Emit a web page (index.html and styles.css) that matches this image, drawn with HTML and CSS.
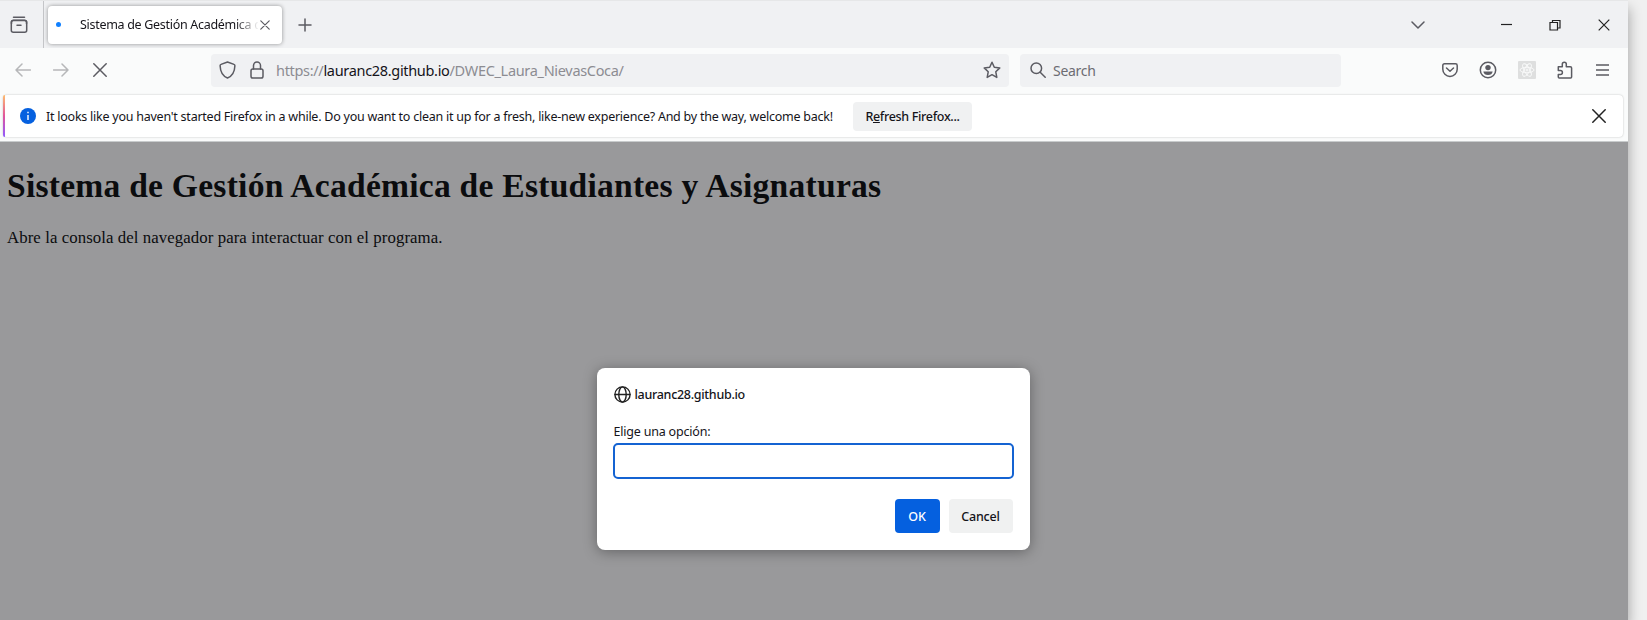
FILE: index.html
```
<!DOCTYPE html>
<html lang="es">
<head>
<meta charset="utf-8">
<title>Sistema de Gestión Académica</title>
<link rel="stylesheet" href="styles.css">
</head>
<body>
<div class="window">
  <header class="tabbar">
    <div class="view">
      <svg class="icon" width="18" height="18" viewBox="0 0 18 18"><path d="M3.5 1.2h11"/><rect x="1.3" y="4.4" width="15.4" height="11.8" rx="2"/><path d="M1.5 7.4V6q0-1.8 2-1.8h11q2 0 2 1.8v1.4M7 9.3h4"/></svg>
    </div>
    <div class="tab">
      <span class="loading"></span>
      <span class="tab-title">Sistema de Gestión Académica d</span>
      <svg class="icon" width="10" height="10" viewBox="0 0 10 10"><path d="M.8.8l8.4 8.4M9.2.8L.8 9.2"/></svg>
    </div>
    <svg class="icon new-tab" width="14" height="14" viewBox="0 0 14 14"><path d="M7 1v12M1 7h12"/></svg>
    <svg class="icon all-tabs" width="14" height="8" viewBox="0 0 14 8"><path d="M1 1l6 6 6-6"/></svg>
    <svg class="icon sys minimize" width="11" height="11" viewBox="0 0 11 11"><path d="M0 5.5h11"/></svg>
    <svg class="icon sys restore" width="12" height="12" viewBox="0 0 12 12"><path d="M1 3.5h7.5V11H1zM3.5 3.5v-2H11V9H8.5"/></svg>
    <svg class="icon sys close" width="12" height="12" viewBox="0 0 12 12"><path d="M.7.7l10.6 10.6M11.3.7L.7 11.3"/></svg>
  </header>

  <nav class="toolbar">
    <svg class="icon dim back" width="16" height="14" viewBox="0 0 16 14"><path d="M15.5 7H1M7 1L1 7l6 6"/></svg>
    <svg class="icon dim forward" width="16" height="14" viewBox="0 0 16 14"><path d="M.5 7H15M9 1l6 6-6 6"/></svg>
    <svg class="icon stop" width="14" height="14" viewBox="0 0 14 14"><path d="M.8.8l12.4 12.4M13.2.8L.8 13.2"/></svg>
    <div class="urlbar">
      <svg class="icon" width="17" height="18" viewBox="0 0 17 18"><path d="M8.5 1L15 3.4q.9.3.9 1.3C15.700 10.500 13.300 15 8.500 17 3.700 15 1.300 10.500 1.100 4.700q0-1 .9-1.300z"/></svg>
      <svg class="icon lock" width="14" height="18" viewBox="0 0 14 18"><rect x="1" y="8" width="12" height="9" rx="1.800"/><path d="M3.500 8V4.500a3.500 3.500 0 017 0V8"/></svg>
      <span class="url">https://<b>lauranc28.github.io</b>/DWEC_Laura_NievasCoca/</span>
      <svg class="icon star" width="18" height="18" viewBox="0 0 18 18"><path d="M9 1.200l2.300 5 5.500.700-4 3.900 1 5.600L9 13.700l-4.800 2.700 1-5.600-4-3.900 5.500-.700z"/></svg>
    </div>
    <div class="search">
      <svg class="icon" width="16" height="16" viewBox="0 0 16 16"><circle cx="6.300" cy="6.300" r="5.300"/><path d="M10.200 10.200l5 5"/></svg>
      <span class="search-text">Search</span>
    </div>
    <div class="actions">
      <svg class="icon" width="16" height="16" viewBox="0 0 16 16"><path d="M2.500 1.800h11q1.700 0 1.700 1.700v3.700a7.200 7.200 0 01-14.400 0V3.500q0-1.700 1.700-1.700zM4.500 6L8 9.300 11.500 6"/></svg>
      <svg class="icon" width="18" height="18" viewBox="0 0 18 18"><circle cx="9" cy="9" r="7.700"/><circle class="solid" cx="9" cy="6.600" r="2.700"/><path class="solid" d="M4.300 10.500h9.400q-.7 3.600-4.700 3.600t-4.700-3.600z"/></svg>
      <svg class="react" width="18" height="18" viewBox="0 0 18 18"><rect width="18" height="18" rx="1"/><g transform="translate(9 9)"><ellipse rx="7" ry="2.700"/><ellipse rx="7" ry="2.700" transform="rotate(60)"/><ellipse rx="7" ry="2.700" transform="rotate(120)"/><circle r="1"/></g></svg>
      <svg class="icon" width="16" height="18" viewBox="0 0 16 18"><path d="M1.300 5.800h4V3.300a2 2 0 014 0v2.500h4q1.300 0 1.300 1.300V16q0 1-1 1H2.300q-1 0-1-1v-2.600h2.100a2 2 0 000-4H1.300z"/></svg>
      <svg class="icon menu" width="13" height="12" viewBox="0 0 13 12"><path d="M0 1h13M0 6h13M0 11h13"/></svg>
    </div>
  </nav>

  <section class="notice-wrap">
    <div class="notice">
      <svg class="info" width="16" height="16" viewBox="0 0 16 16"><circle cx="8" cy="8" r="8"/><path d="M8 7v5M8 3.800v1.500"/></svg>
      <span class="notice-text">It looks like you haven't started Firefox in a while. Do you want to clean it up for a fresh, like-new experience? And by the way, welcome back!</span>
      <button class="refresh"><span>R<u>e</u>fresh Firefox...</span></button>
      <svg class="icon dismiss" width="14" height="14" viewBox="0 0 14 14"><path d="M.8.8l12.400 12.400M13.200.8L.8 13.200"/></svg>
    </div>
  </section>

  <main class="page">
    <h1>Sistema de Gestión Académica de Estudiantes y Asignaturas</h1>
    <p>Abre la consola del navegador para interactuar con el programa.</p>
    <div class="dialog">
      <div class="origin">
        <svg class="icon" width="17" height="17" viewBox="0 0 17 17"><circle cx="8.500" cy="8.500" r="7.600"/><ellipse cx="8.500" cy="8.500" rx="3.700" ry="7.600"/><path d="M1 8.500h15"/></svg>
        <span>lauranc28.github.io</span>
      </div>
      <label class="prompt" for="answer">Elige una opción:</label>
      <input class="answer" id="answer" type="text">
      <div class="buttons">
        <button class="ok">OK</button>
        <button class="cancel">Cancel</button>
      </div>
    </div>
  </main>
</div>
</body>
</html>
```
FILE: styles.css
```
* { box-sizing: border-box; }
body {
  margin: 0;
  height: 620px;
  overflow: hidden;
  background: #f0f0f0;
  font-family: "Noto Sans", "Open Sans", sans-serif;
  color: #15141a;
}
.window {
  width: 1628px;
  height: 620px;
  display: flex;
  flex-direction: column;
  background: #fafbfb;
  box-shadow: 1px 8px 12px rgba(0, 0, 0, .3);
}
svg { display: block; flex: none; }
.icon { fill: none; stroke: #5b5b62; stroke-width: 1.5; stroke-linecap: round; stroke-linejoin: round; }
.icon .solid { fill: #5b5b62; stroke: none; }
.icon.dim { stroke: #b6b7b9; }
button { font: inherit; border: 0; padding: 0; color: inherit; border-radius: 4px; }

.tabbar { height: 48px; padding-bottom: 0; display: flex; align-items: center; background: #f0f1f3; border-top: 1px solid #e6e7e8; }
.view { width: 44px; height: 47px; padding: 15px 0 0 10px; border-right: 1px solid #c4c5c8; }
.tab {
  width: 234px; height: 38px; margin-left: 4px; padding: 0 12px 0 8px;
  display: flex; align-items: center;
  background: #fff; border-radius: 4px; box-shadow: 0 0 4px rgba(0, 0, 0, .4);
}
.tab .icon, .sys { stroke-width: 1.200; }
.loading { width: 5px; height: 5px; border-radius: 50%; background: #1080ff; }
.tab-title {
  width: 178px; margin: 0 2px 0 19px; white-space: nowrap;
  font-size: 12.500px; letter-spacing: -.300px;
  -webkit-mask-image: linear-gradient(to right, #000 155px, transparent 179px);
  mask-image: linear-gradient(to right, #000 155px, transparent 179px);
}
.new-tab { margin-left: 16px; }
.all-tabs { margin-left: auto; }
.icon.sys { stroke: #222; stroke-linecap: butt; stroke-linejoin: miter; }
.minimize { margin-left: 76px; }
.restore { margin-left: 37px; }
.close { margin: 0 18px 0 37px; }

.toolbar { height: 46px; display: flex; align-items: center; padding: 0 19px 2px 15px; background: #fafbfb; }
.forward { margin-left: 22px; }
.stop { margin-left: 24px; }
.urlbar {
  width: 798px; height: 33px; margin-left: 104px; padding: 0 8px 0 8px;
  display: flex; align-items: center; background: #f0f1f3; border-radius: 4px;
}
.lock { margin-left: 14px; }
.url { margin-left: 12px; font-size: 14.500px; color: #8c8c92; white-space: nowrap; letter-spacing: -.320px; }
.url b { font-weight: 400; color: #15141a; }
.star { margin-left: auto; }
.search {
  width: 321px; height: 33px; margin-left: 11px; padding-left: 10px;
  display: flex; align-items: center; background: #f0f1f3; border-radius: 4px;
}
.search-text { margin-left: 7px; font-size: 14px; color: #6c6c72; letter-spacing: -.3px; }
.actions { margin-left: auto; display: flex; align-items: center; gap: 21px; }
.menu { margin-left: 2px; }
.react rect { fill: #dedfdf; }
.react g { fill: none; stroke: #fafbfb; stroke-width: .9; }

.notice-wrap { height: 48px; padding: 1px 5px 4px 3px; border-bottom: 1px solid #c8cbcc; }
.notice {
  height: 42px; padding: 0 17px 0 15px; display: flex; align-items: center; position: relative;
  background: #fff; border-radius: 4px; box-shadow: 0 0 2px rgba(0, 0, 0, .25);
}
.notice::before {
  content: ""; position: absolute; left: 0; top: 0; bottom: 0; width: 2px;
  background: linear-gradient(#ffbd6e, #e0559c 50%, #9059ff); border-radius: 2px 0 0 2px;
}
.info { margin-left: 2px; fill: #0560df; }
.info path { stroke: #fff; stroke-width: 1.400; }
.notice-text { width: 788px; margin-left: 10px; font-size: 12.500px; white-space: nowrap; letter-spacing: -.242px; }
.refresh { width: 119px; height: 29px; margin-left: 19px; background: #f0f1f2; font-size: 12.500px; font-weight: 500; letter-spacing: -.320px; }
.icon.dismiss { margin-left: auto; stroke: #222; }

.page {
  flex: 1; padding: 0 7px; overflow: hidden; position: relative;
  background: #99999b; color: #0b0c0e; font-family: "Liberation Serif", "Times New Roman", serif;
}
.page h1 { margin: 24px 0 0; font-size: 33.600px; line-height: 39px; letter-spacing: .235px; white-space: nowrap; }
.page p { margin: 23px 0 0; font-size: 16.800px; line-height: 19px; letter-spacing: .080px; white-space: nowrap; }
.dialog {
  position: absolute; left: 596.500px; top: 226px; width: 433px; height: 182px; padding: 17px 16px;
  background: #fff; border-radius: 8px; box-shadow: 0 2px 14px rgba(0, 0, 0, .35);
  display: flex; flex-direction: column;
  font-family: "Noto Sans", "Open Sans", sans-serif; font-size: 12.500px; color: #15141a;
}
.origin { height: 19px; display: flex; align-items: center; gap: 4px; padding-left: 1px; font-weight: 500; letter-spacing: -.290px; }
.origin .icon { stroke: #222; stroke-width: 1.400; }
.prompt { margin: 19px 0 0 1px; height: 18px; line-height: 18px; letter-spacing: -.2px; }
.answer { width: 401px; height: 36px; margin-top: 2px; border: 2px solid #1463d2; border-radius: 5px; background: #fff; outline: none; }
.buttons { display: flex; justify-content: flex-end; gap: 9px; margin: 20px 1px 0 0; }
.buttons button { height: 34px; font-weight: 500; letter-spacing: -.2px; }
.buttons .ok { width: 45px; background: #0560df; color: #fff; }
.buttons .cancel { width: 64px; background: #f0f1f1; }
```
